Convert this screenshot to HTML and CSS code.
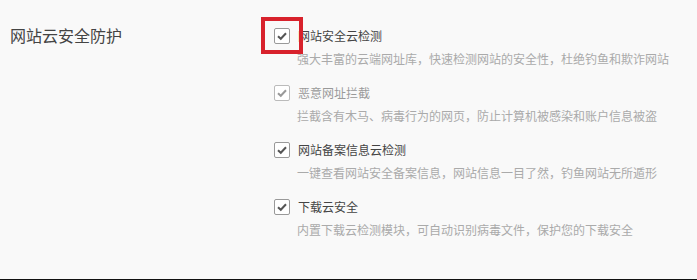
FILE: index.html
```html
<!DOCTYPE html>
<html lang="zh-CN">
<head>
<meta charset="utf-8">
<title>网站云安全防护</title>
<link rel="stylesheet" href="styles.css">
</head>
<body>
<div class="page">
  <div class="section">
    <div class="section-title">网站云安全防护</div>
    <div class="options">
      <div class="option">
        <div class="option-head">
          <span class="checkbox">
            <svg width="16" height="16" viewBox="0 0 16 16"><path d="M4 8.2 L6.8 10.8 L12 5.3" fill="none" stroke="#555" stroke-width="2"/></svg>
          </span>
          <span class="option-title">网站安全云检测</span>
          <span class="highlight"></span>
        </div>
        <div class="option-desc">强大丰富的云端网址库，快速检测网站的安全性，杜绝钓鱼和欺诈网站</div>
      </div>
      <div class="option disabled">
        <div class="option-head">
          <span class="checkbox">
            <svg width="16" height="16" viewBox="0 0 16 16"><path d="M4 8.2 L6.8 10.8 L12 5.3" fill="none" stroke="#999" stroke-width="2"/></svg>
          </span>
          <span class="option-title">恶意网址拦截</span>
        </div>
        <div class="option-desc">拦截含有木马、病毒行为的网页，防止计算机被感染和账户信息被盗</div>
      </div>
      <div class="option">
        <div class="option-head">
          <span class="checkbox">
            <svg width="16" height="16" viewBox="0 0 16 16"><path d="M4 8.2 L6.8 10.8 L12 5.3" fill="none" stroke="#555" stroke-width="2"/></svg>
          </span>
          <span class="option-title">网站备案信息云检测</span>
        </div>
        <div class="option-desc">一键查看网站安全备案信息，网站信息一目了然，钓鱼网站无所遁形</div>
      </div>
      <div class="option">
        <div class="option-head">
          <span class="checkbox">
            <svg width="16" height="16" viewBox="0 0 16 16"><path d="M4 8.2 L6.8 10.8 L12 5.3" fill="none" stroke="#555" stroke-width="2"/></svg>
          </span>
          <span class="option-title">下载云安全</span>
        </div>
        <div class="option-desc">内置下载云检测模块，可自动识别病毒文件，保护您的下载安全</div>
      </div>
    </div>
  </div>
</div>
</body>
</html>
```
FILE: styles.css
```css
html, body {
  margin: 0;
  padding: 0;
  background: #f9f9f9;
}
body {
  font-family: "Noto Sans CJK SC", "Noto Sans", sans-serif;
}
.page {
  height: 279px;
  border-bottom: 1px solid #111;
  overflow: hidden;
}
.section {
  display: flex;
  padding-top: 27px;
}
.section-title {
  width: 264px;
  padding-left: 10px;
  font-size: 16px;
  line-height: 20px;
  margin-top: -2px;
  color: #444;
}
.options {
  display: flex;
  flex-direction: column;
  gap: 16px;
}
.option-head {
  position: relative;
  display: flex;
  align-items: center;
  gap: 8px;
  height: 18px;
}
.checkbox {
  box-sizing: border-box;
  width: 16px;
  height: 16px;
  border: 1px solid #999;
  border-radius: 2px;
  background: #fff;
  display: flex;
  align-items: center;
  justify-content: center;
}
.checkbox svg {
  display: block;
  margin: -1px;
}
.option-title {
  font-size: 12px;
  line-height: 18px;
  color: #444;
}
.option-desc {
  margin-top: 5px;
  padding-left: 23px;
  font-size: 12px;
  line-height: 18px;
  color: #aaa;
}
.disabled .checkbox {
  border-color: #bbb;
}
.disabled .option-title {
  color: #999;
}
.highlight {
  position: absolute;
  left: -13px;
  top: -10px;
  width: 42px;
  height: 37px;
  box-sizing: border-box;
  border: 4px solid #d8222c;
  pointer-events: none;
}
```
